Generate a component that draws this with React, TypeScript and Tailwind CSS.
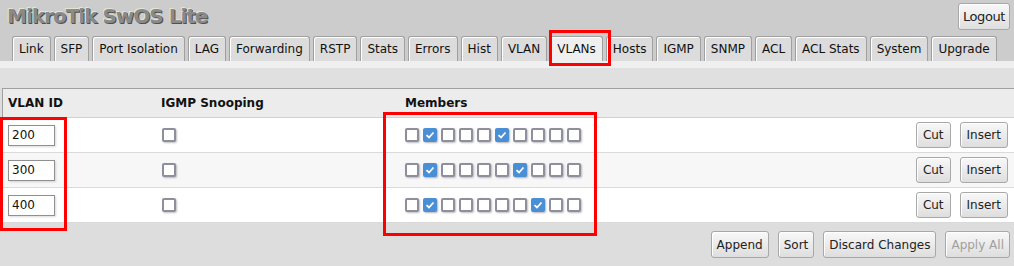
import React from "react";

const tabs = [
  "Link",
  "SFP",
  "Port Isolation",
  "LAG",
  "Forwarding",
  "RSTP",
  "Stats",
  "Errors",
  "Hist",
  "VLAN",
  "VLANs",
  "Hosts",
  "IGMP",
  "SNMP",
  "ACL",
  "ACL Stats",
  "System",
  "Upgrade",
];

const rows = [
  { id: "200", members: [1, 5], bg: "bg-white" },
  { id: "300", members: [1, 6], bg: "bg-[#f7f7f7]" },
  { id: "400", members: [1, 7], bg: "bg-white" },
];

const btn =
  "h-[26px] px-[6px] whitespace-nowrap border border-[#a8a8a8] rounded-[3px] bg-gradient-to-b from-[#f8f8f8] to-[#dedede] text-[12px] text-[#222] shadow-[inset_1px_1px_0_#fff]";

function Box({ checked }: { checked?: boolean }) {
  if (checked) {
    return (
      <span className="w-[14px] h-[14px] rounded-[2px] bg-[#4a8fd6] shadow-[1px_1px_2px_rgba(0,0,0,0.3)] flex items-center justify-center">
        <svg width="10" height="10" viewBox="0 0 10 10">
          <path d="M1.5 5.2 L4 7.5 L8.5 2.5" fill="none" stroke="#fff" strokeWidth="1.8" />
        </svg>
      </span>
    );
  }
  return (
    <span className="w-[14px] h-[14px] rounded-[2px] border-2 border-[#8e8e9c] bg-white shadow-[1px_1px_2px_rgba(0,0,0,0.25)]" />
  );
}

export default function App() {
  return (
    <div
      className="relative w-[1014px] h-[266px] bg-[#dddddd] overflow-hidden text-[12px] text-[#111]"
      style={{ fontFamily: "'DejaVu Sans', Verdana, sans-serif" }}
    >
      {/* Kopfzeile */}
      <div className="bg-[#cccccc]">
        <div className="flex items-start justify-between h-[36px] pl-[7px] pr-[4px]">
          <h1 className="mt-[1px] whitespace-nowrap text-[20px] font-bold tracking-[-1px] text-[#8a8a8a] [text-shadow:1px_1px_0_#505050,-1px_-1px_0_#e6e6d0]">
            MikroTik SwOS Lite
          </h1>
          <button className={`${btn} mt-[3px] h-[27px] !px-[4px] !text-[13px] tracking-[-0.4px]`}>Logout</button>
        </div>
        {/* Reiter */}
        <div className="flex items-end gap-[3px] pl-[12px] h-[25px]">
          {tabs.map((t) => (
            <div
              key={t}
              className={`h-[25px] px-[6px] whitespace-nowrap flex items-center border border-b-0 border-[#a0a0a0] rounded-t-[3px] shadow-[inset_1px_1px_0_#fff] ${
                t === "VLANs" ? "bg-[#efefef]" : "bg-[#dcdcdc]"
              }`}
            >
              {t}
            </div>
          ))}
        </div>
      </div>
      <div className="h-[7px] bg-[#efefef]" />
      <div className="h-[20px] bg-[#e0e0e0]" />

      {/* Tabelle */}
      <div className="ml-[2px] border-t border-l border-[#a0a0a0]">
        <div className="flex items-center h-[29px] bg-[#ececec] border-b border-[#d0d0d0] font-bold">
          <div className="w-[158px] pl-[5px]">VLAN ID</div>
          <div className="w-[244px]">IGMP Snooping</div>
          <div>Members</div>
        </div>
        {rows.map((r) => (
          <div key={r.id} className={`flex items-center h-[35px] border-b border-[#dadada] ${r.bg}`}>
            <div className="w-[158px] pl-[5px]">
              <input
                readOnly
                value={r.id}
                className="w-[47px] h-[21px] border border-[#909090] bg-white pl-[3px] text-[12px] outline-none shadow-[1px_1px_2px_rgba(0,0,0,0.15)]"
              />
            </div>
            <div className="w-[244px] pl-[1px] flex">
              <Box />
            </div>
            <div className="flex gap-[4px]">
              {Array.from({ length: 10 }).map((_, i) => (
                <Box key={i} checked={r.members.includes(i)} />
              ))}
            </div>
            <div className="ml-auto flex gap-[9px] pr-[6px]">
              <button className={btn}>Cut</button>
              <button className={btn}>Insert</button>
            </div>
          </div>
        ))}
      </div>

      {/* Aktionen */}
      <div className="flex justify-end gap-[9px] pr-[4px] pt-[8px]">
        <button className={`${btn} h-[27px] !px-[5px]`}>Append</button>
        <button className={`${btn} h-[27px] !px-[5px]`}>Sort</button>
        <button className={`${btn} h-[27px] !px-[5px]`}>Discard Changes</button>
        <button className={`${btn} h-[27px] !px-[5px] !text-[#a0a0a0]`}>Apply All</button>
      </div>

      {/* Markierungen */}
      <div className="absolute left-[549px] top-[30px] w-[62px] h-[36px] border-[3px] border-[#ff0000]" />
      <div className="absolute left-[0px] top-[117px] w-[67px] h-[114px] border-[3px] border-[#ff0000]" />
      <div className="absolute left-[383px] top-[112px] w-[214px] h-[124px] border-[3px] border-[#ff0000]" />
    </div>
  );
}
